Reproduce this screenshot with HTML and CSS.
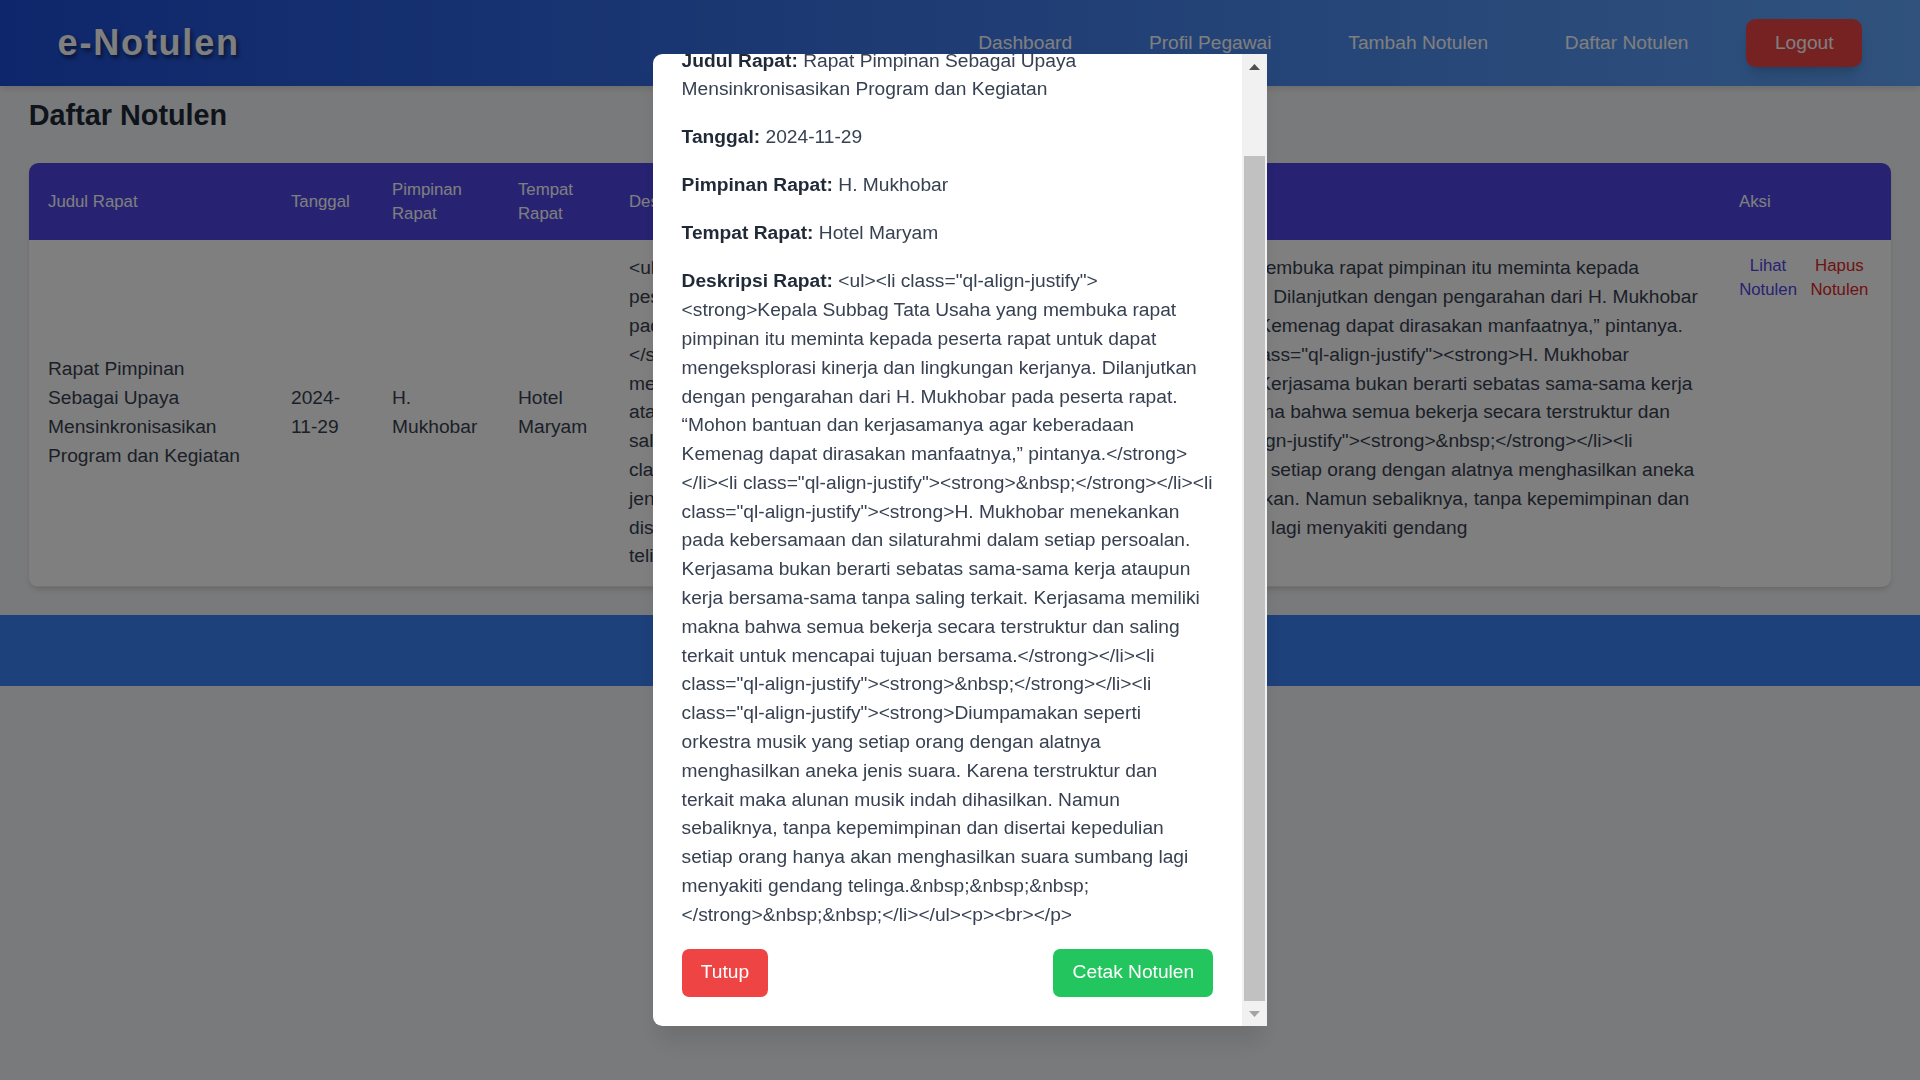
FILE: index.html
```html
<!DOCTYPE html>
<html lang="id">
<head>
<meta charset="utf-8">
<title>e-Notulen - Daftar Notulen</title>
<link rel="stylesheet" href="styles.css">
</head>
<body>
<header class="header">
  <h1 class="logo">e-Notulen</h1>
  <nav>
    <ul class="nav">
      <li><a href="#">Dashboard</a></li>
      <li><a href="#">Profil Pegawai</a></li>
      <li><a href="#">Tambah Notulen</a></li>
      <li><a href="#">Daftar Notulen</a></li>
      <li><a href="#" class="logout">Logout</a></li>
    </ul>
  </nav>
</header>

<main class="main">
  <h2 class="page-title">Daftar Notulen</h2>
  <div class="table-card">
    <table class="table">
      <colgroup>
        <col class="c-judul"><col class="c-tgl"><col class="c-pimp"><col class="c-tempat"><col class="c-desk"><col class="c-aksi">
      </colgroup>
      <thead>
        <tr>
          <th>Judul Rapat</th>
          <th>Tanggal</th>
          <th>Pimpinan Rapat</th>
          <th>Tempat Rapat</th>
          <th>Deskripsi Rapat</th>
          <th>Aksi</th>
        </tr>
      </thead>
      <tbody>
        <tr>
          <td>Rapat Pimpinan Sebagai Upaya Mensinkronisasikan Program dan Kegiatan</td>
          <td>2024-11-29</td>
          <td>H. Mukhobar</td>
          <td>Hotel Maryam</td>
          <td>&lt;ul&gt;&lt;li class="ql-align-justify"&gt;&lt;strong&gt;Kepala Subbag Tata Usaha yang membuka rapat pimpinan itu meminta kepada peserta rapat untuk dapat mengeksplorasi kinerja dan lingkungan kerjanya. Dilanjutkan dengan pengarahan dari H. Mukhobar pada peserta rapat. “Mohon bantuan dan kerjasamanya agar keberadaan Kemenag dapat dirasakan manfaatnya,” pintanya.&lt;/strong&gt;&lt;/li&gt;&lt;li class="ql-align-justify"&gt;&lt;strong&gt;&amp;nbsp;&lt;/strong&gt;&lt;/li&gt;&lt;li class="ql-align-justify"&gt;&lt;strong&gt;H. Mukhobar menekankan pada kebersamaan dan silaturahmi dalam setiap persoalan. Kerjasama bukan berarti sebatas sama-sama kerja ataupun kerja bersama-sama tanpa saling terkait. Kerjasama memiliki makna bahwa semua bekerja secara terstruktur dan saling terkait untuk mencapai tujuan bersama.&lt;/strong&gt;&lt;/li&gt;&lt;li class="ql-align-justify"&gt;&lt;strong&gt;&amp;nbsp;&lt;/strong&gt;&lt;/li&gt;&lt;li class="ql-align-justify"&gt;&lt;strong&gt;Diumpamakan seperti orkestra musik yang setiap orang dengan alatnya menghasilkan aneka jenis suara. Karena terstruktur dan terkait maka alunan musik indah dihasilkan. Namun sebaliknya, tanpa kepemimpinan dan disertai kepedulian setiap orang hanya akan menghasilkan suara sumbang lagi menyakiti gendang telinga.&amp;nbsp;&amp;nbsp;&amp;nbsp;&lt;/strong&gt;&amp;nbsp;&amp;nbsp;&lt;/li&gt;&lt;/ul&gt;&lt;p&gt;&lt;br&gt;&lt;/p&gt;</td>
          <td class="aksi">
            <div class="aksi-links">
              <a href="#" class="link-lihat">Lihat Notulen</a>
              <a href="#" class="link-hapus">Hapus Notulen</a>
            </div>
          </td>
        </tr>
      </tbody>
    </table>
  </div>
</main>

<footer class="footer">
  <p>&copy; 2024 e-Notulen. All rights reserved.</p>
</footer>

<div class="overlay">
  <div class="modal">
    <div class="modal-body" id="modalBody">
      <h3 class="modal-title">Detail Notulen</h3>
      <p><strong>Judul Rapat:</strong> Rapat Pimpinan Sebagai Upaya Mensinkronisasikan Program dan Kegiatan</p>
      <p><strong>Tanggal:</strong> 2024-11-29</p>
      <p><strong>Pimpinan Rapat:</strong> H. Mukhobar</p>
      <p><strong>Tempat Rapat:</strong> Hotel Maryam</p>
      <p><strong>Deskripsi Rapat:</strong> &lt;ul&gt;&lt;li class="ql-align-justify"&gt;&lt;strong&gt;Kepala Subbag Tata Usaha yang membuka rapat pimpinan itu meminta kepada peserta rapat untuk dapat mengeksplorasi kinerja dan lingkungan kerjanya. Dilanjutkan dengan pengarahan dari H. Mukhobar pada peserta rapat. “Mohon bantuan dan kerjasamanya agar keberadaan Kemenag dapat dirasakan manfaatnya,” pintanya.&lt;/strong&gt;&lt;/li&gt;&lt;li class="ql-align-justify"&gt;&lt;strong&gt;&amp;nbsp;&lt;/strong&gt;&lt;/li&gt;&lt;li class="ql-align-justify"&gt;&lt;strong&gt;H. Mukhobar menekankan pada kebersamaan dan silaturahmi dalam setiap persoalan. Kerjasama bukan berarti sebatas sama-sama kerja ataupun kerja bersama-sama tanpa saling terkait. Kerjasama memiliki makna bahwa semua bekerja secara terstruktur dan saling terkait untuk mencapai tujuan bersama.&lt;/strong&gt;&lt;/li&gt;&lt;li class="ql-align-justify"&gt;&lt;strong&gt;&amp;nbsp;&lt;/strong&gt;&lt;/li&gt;&lt;li class="ql-align-justify"&gt;&lt;strong&gt;Diumpamakan seperti orkestra musik yang setiap orang dengan alatnya menghasilkan aneka jenis suara. Karena terstruktur dan terkait maka alunan musik indah dihasilkan. Namun sebaliknya, tanpa kepemimpinan dan disertai kepedulian setiap orang hanya akan menghasilkan suara sumbang lagi menyakiti gendang telinga.&amp;nbsp;&amp;nbsp;&amp;nbsp;&lt;/strong&gt;&amp;nbsp;&amp;nbsp;&lt;/li&gt;&lt;/ul&gt;&lt;p&gt;&lt;br&gt;&lt;/p&gt;</p>
      <div class="btn-row">
        <button class="btn btn-tutup">Tutup</button>
        <button class="btn btn-cetak">Cetak Notulen</button>
      </div>
    </div>
    <div class="scrollbar">
      <div class="sb-btn">
        <svg width="11" height="6" viewBox="0 0 11 6"><polygon points="5.5,0 11,6 0,6" fill="#505050"/></svg>
      </div>
      <div class="sb-track"><div class="sb-thumb"></div></div>
      <div class="sb-btn">
        <svg width="11" height="6" viewBox="0 0 11 6"><polygon points="0,0 11,0 5.5,6" fill="#a3a3a3"/></svg>
      </div>
    </div>
  </div>
</div>
<script src="script.js"></script>
</body>
</html>
```

FILE: styles.css
```css
html, body {
  margin: 0;
  padding: 0;
  background: #f3f4f6;
}
body {
  font-family: "Liberation Sans", Arial, Helvetica, sans-serif;
  font-size: 19.2px;
  line-height: 28.8px;
  color: #374151;
}
* { box-sizing: border-box; }

/* Header */
.header {
  display: flex;
  align-items: center;
  justify-content: space-between;
  padding: 19.2px 57.6px;
  background: linear-gradient(to right, #1d4ed8, #60a5fa);
  box-shadow: 0 4px 6px -1px rgba(0,0,0,0.1);
}
.logo {
  margin: 0;
  font-size: 36px;
  line-height: 48px;
  font-weight: bold;
  letter-spacing: 1.8px;
  color: #ffffff;
  text-shadow: 2px 3px 4px rgba(0,0,0,0.55);
}
.nav {
  display: flex;
  align-items: center;
  gap: 38.4px;
  list-style: none;
  margin: 0;
  padding: 0;
}
.nav a {
  display: block;
  color: #ffffff;
  text-decoration: none;
  padding: 9.6px 19.2px;
}
.nav a.logout {
  background: #ef4444;
  padding: 9.6px 28.8px;
  border-radius: 9.6px;
  box-shadow: 0 10px 15px -3px rgba(0,0,0,0.15), 0 4px 6px -4px rgba(0,0,0,0.15);
}

/* Main */
.main {
  padding: 9.6px 28.8px 28.8px;
}
.page-title {
  margin: 0 0 28.8px;
  font-size: 28.8px;
  line-height: 38.4px;
  font-weight: bold;
  color: #1f2937;
}
.table-card {
  background: #ffffff;
  border-radius: 9.6px;
  overflow: hidden;
  box-shadow: 0 4px 6px -1px rgba(0,0,0,0.1), 0 2px 4px -2px rgba(0,0,0,0.1);
}
.table {
  width: 100%;
  border-collapse: collapse;
  table-layout: fixed;
}
.c-judul { width: 243px; }
.c-tgl { width: 101px; }
.c-pimp { width: 126px; }
.c-tempat { width: 111px; }
.c-desk { width: 1110px; }
.c-aksi { width: 171.4px; }
.table th {
  background: #4f46e5;
  color: #ffffff;
  font-weight: normal;
  font-size: 16.8px;
  line-height: 24px;
  text-align: left;
  padding: 14.4px 19.2px;
  vertical-align: middle;
}
.table td {
  padding: 14.4px 19.2px;
  border-bottom: 1px solid #e5e7eb;
  vertical-align: middle;
  color: #374151;
}
.table td.aksi {
  vertical-align: top;
  border-bottom: none;
}
.aksi-links {
  display: flex;
  gap: 9.6px;
  font-size: 16.8px;
  line-height: 24px;
}
.aksi-links a {
  text-align: center;
  text-decoration: none;
}
.link-lihat { color: #4f46e5; }
.link-hapus { color: #dc2626; }

/* Footer */
.footer {
  background: #3b82f6;
  color: #ffffff;
  text-align: center;
  padding: 21px 0;
}
.footer p { margin: 0; }

/* Modal */
.overlay {
  position: fixed;
  inset: 0;
  background: rgba(0,0,0,0.5);
  display: flex;
  align-items: center;
  justify-content: center;
}
.modal {
  display: flex;
  width: 614.4px;
  height: 90vh;
  background: #ffffff;
  border-radius: 9.6px 0 0 9.6px;
  overflow: hidden;
  box-shadow: 0 20px 25px -5px rgba(0,0,0,0.1);
}
.modal-body {
  flex: 1;
  min-width: 0;
  overflow: hidden;
  padding: 28.8px;
}
.modal-title {
  margin: 0 0 19.2px;
  font-size: 24px;
  line-height: 33.6px;
  font-weight: bold;
  color: #1f2937;
}
.modal-body p {
  margin: 0 0 19.2px;
  color: #374151;
}
.modal-body p strong {
  color: #1f2937;
}
.btn-row {
  display: flex;
  justify-content: space-between;
}
.btn {
  font: inherit;
  border: none;
  color: #ffffff;
  padding: 9.6px 19.2px;
  border-radius: 7.2px;
}
.btn-tutup { background: #ef4444; }
.btn-cetak { background: #22c55e; }

/* Drawn scrollbar of the modal */
.scrollbar {
  flex: 0 0 25px;
  display: flex;
  flex-direction: column;
  background: #f1f1f1;
}
.sb-btn {
  flex: 0 0 25px;
  display: flex;
  align-items: center;
  justify-content: center;
}
.sb-track {
  flex: 1;
  display: flex;
  flex-direction: column;
  justify-content: flex-end;
  padding: 0 2px;
}
.sb-thumb {
  height: 845px;
  background: #c1c1c1;
}
```

FILE: script.js
```js
var body = document.getElementById('modalBody');
body.scrollTop = body.scrollHeight;
```
